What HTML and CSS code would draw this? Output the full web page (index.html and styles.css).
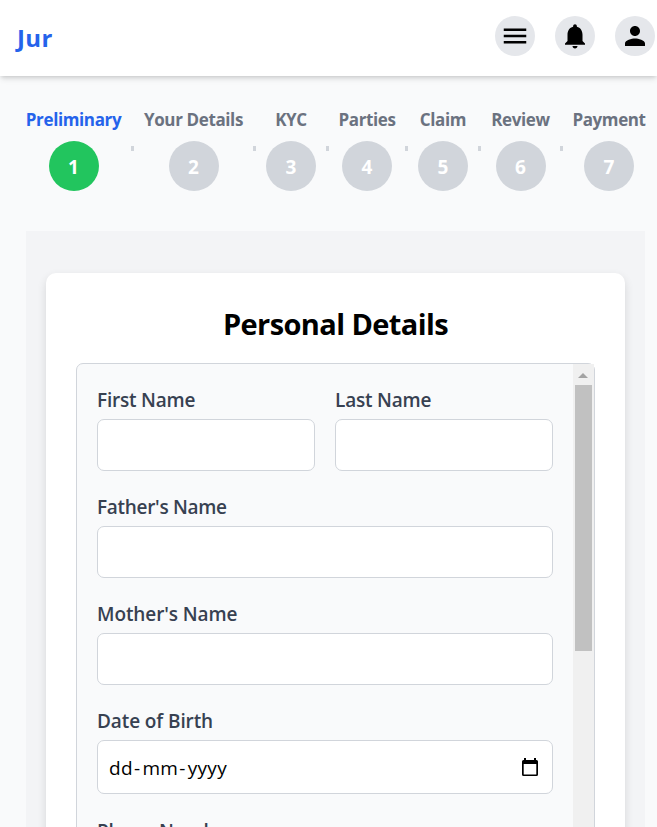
FILE: index.html
```html
<!DOCTYPE html>
<html lang="en">
<head>
<meta charset="utf-8">
<title>Jur</title>
<link rel="stylesheet" href="styles.css">
</head>
<body>
<header class="topbar">
  <div class="brand">Jur</div>
  <nav class="actions">
    <button class="icon-btn" aria-label="Menu"><svg viewBox="0 0 24 24"><path d="M3 18h18v-2H3v2zm0-5h18v-2H3v2zm0-7v2h18V6H3z"/></svg></button>
    <button class="icon-btn" aria-label="Notifications"><svg viewBox="0 0 24 24"><path d="M12 22c1.1 0 2-.9 2-2h-4c0 1.1.89 2 2 2zm6-6v-5c0-3.07-1.64-5.64-4.5-6.32V4c0-.83-.67-1.5-1.5-1.5s-1.5.67-1.5 1.5v.68C7.63 5.36 6 7.92 6 11v5l-2 2v1h16v-1l-2-2z"/></svg></button>
    <button class="icon-btn" aria-label="Profile"><svg viewBox="0 0 24 24"><path d="M12 12c2.21 0 4-1.79 4-4s-1.79-4-4-4-4 1.79-4 4 1.79 4 4 4zm0 2c-2.67 0-8 1.34-8 4v2h16v-2c0-2.66-5.33-4-8-4z"/></svg></button>
  </nav>
</header>
<main class="page">
  <ol class="steps">
    <li class="step active"><span class="name">Preliminary</span><span class="dot">1</span></li>
    <li class="sep"></li>
    <li class="step"><span class="name">Your Details</span><span class="dot">2</span></li>
    <li class="sep"></li>
    <li class="step"><span class="name">KYC</span><span class="dot">3</span></li>
    <li class="sep"></li>
    <li class="step"><span class="name">Parties</span><span class="dot">4</span></li>
    <li class="sep"></li>
    <li class="step"><span class="name">Claim</span><span class="dot">5</span></li>
    <li class="sep"></li>
    <li class="step"><span class="name">Review</span><span class="dot">6</span></li>
    <li class="sep"></li>
    <li class="step"><span class="name">Payment</span><span class="dot">7</span></li>
  </ol>
  <section class="panel">
    <div class="card">
      <h1 class="title">Personal Details</h1>
      <div class="scroller">
        <form class="form">
          <div class="row">
            <div class="field"><label class="label">First Name</label><div class="input"></div></div>
            <div class="field"><label class="label">Last Name</label><div class="input"></div></div>
          </div>
          <div class="field"><label class="label father">Father's Name</label><div class="input"></div></div>
          <div class="field"><label class="label mother">Mother's Name</label><div class="input"></div></div>
          <div class="field"><label class="label mother">Date of Birth</label>
            <div class="input date"><span class="date-text">dd<i>-</i>mm<i>-</i>yyyy</span>
              <svg class="calendar" viewBox="0 0 16 19"><path fill-rule="evenodd" d="M2 0h2v2h8V0h2v2h.5A1.5 1.5 0 0 1 16 3.5v13a1.5 1.5 0 0 1-1.5 1.5h-13A1.5 1.5 0 0 1 0 16.500v-13A1.500 1.500 0 0 1 1.500 2H2zM1.700 6v10.400h12.600V6z"/></svg>
            </div>
          </div>
          <div class="field"><label class="label phone">Phone Number</label><div class="input"></div></div>
        </form>
        <div class="scrollbar"><div class="arrow"></div><div class="thumb"></div></div>
      </div>
    </div>
  </section>
</main>
</body>
</html>
```
FILE: styles.css
```css
* { box-sizing: border-box; }
body {
  margin: 0;
  height: 827px;
  overflow: hidden;
  display: flex;
  flex-direction: column;
  background: #f9fafb;
  color: #000;
  font-family: "Open Sans", "Noto Sans", sans-serif;
}
.topbar {
  flex: none;
  height: 76px;
  padding: 0 2px 4px 17px;
  display: flex;
  align-items: center;
  justify-content: space-between;
  background: #fff;
  box-shadow: 0 4px 6px -1px rgba(0,0,0,.1), 0 2px 4px -1px rgba(0,0,0,.12);
}
.brand { color: #2563eb; font-size: 24px; font-weight: 700; padding-top: 2px; letter-spacing: .4px; }
.actions { display: flex; gap: 20px; }
.icon-btn {
  width: 40px;
  height: 40px;
  padding: 0;
  border: 0;
  border-radius: 50%;
  background: #e5e7eb;
  display: grid;
  place-items: center;
}
.icon-btn svg { width: 30px; height: 30px; display: block; }
.page { flex: 1; min-height: 0; padding: 32px 12px 0 26px; display: flex; flex-direction: column; }
.steps {
  list-style: none;
  margin: 0;
  padding: 0;
  flex: none;
  height: 123px;
  display: grid;
  grid-template-columns: 95px 3px 99px 3px 50px 3px 56px 3px 50px 3px 59px 3px 72px;
  column-gap: 10px;
  align-items: start;
}
.step { display: flex; flex-direction: column; align-items: center; }
.name { height: 33px; line-height: 23px; white-space: nowrap; color: #6b7280; font-size: 17px; font-weight: 700; letter-spacing: -.38px; }
.active .name { color: #2563eb; }
.dot {
  width: 50px;
  height: 50px;
  border-radius: 50%;
  background: #d1d5db;
  color: #fff;
  font-size: 19px;
  font-weight: 700;
  line-height: 52px;
  text-align: center;
}
.active .dot { background: #22c55e; }
.sep { margin-top: 38px; height: 5px; background: #d1d5db; }
.panel { flex: 1; min-height: 0; padding: 42px 20px 0; background: #f3f4f6; overflow: hidden; }
.card {
  height: 640px;
  padding: 30px 30px 0;
  border-radius: 10px;
  background: #fff;
  box-shadow: 0 4px 10px rgba(0,0,0,.12);
}
.title { margin: 0 0 20px; height: 40px; line-height: 42px; font-size: 29px; font-weight: 700; letter-spacing: -.6px; text-align: center; white-space: nowrap; }
.scroller { height: 540px; display: flex; border: 1px solid #d1d5db; border-radius: 7px; background: #f9fafb; }
.form { flex: 1; padding: 20px; display: flex; flex-direction: column; gap: 20px; }
.row { display: grid; grid-template-columns: 1fr 1fr; gap: 20px; }
.label { display: block; height: 35px; line-height: 32px; font-size: 19px; font-weight: 600; color: #374151; white-space: nowrap; letter-spacing: -.2px; }
.father { letter-spacing: -.3px; }
.mother { letter-spacing: -.1px; }
.phone { line-height: 34px; }
.input { height: 52px; border: 1px solid #d1d5db; border-radius: 7px; background: #fff; }
.date { height: 54px; padding: 0 14px 0 11px; display: flex; align-items: center; justify-content: space-between; }
.date-text { font-size: 19px; line-height: 54px; padding-top: 2px; white-space: nowrap; letter-spacing: .33px; }
.date-text i { font-style: normal; padding: 0 2px 0 1px; }
.calendar { width: 16px; height: 19px; }
.scrollbar { width: 21px; background: #f0f0f0; display: flex; flex-direction: column; align-items: center; }
.arrow { margin: 9px 1px 7px 0; border: 5px solid transparent; border-top: 0; border-bottom-color: #a3a3a3; }
.thumb { width: 17px; height: 266px; background: #c1c1c1; }
```
